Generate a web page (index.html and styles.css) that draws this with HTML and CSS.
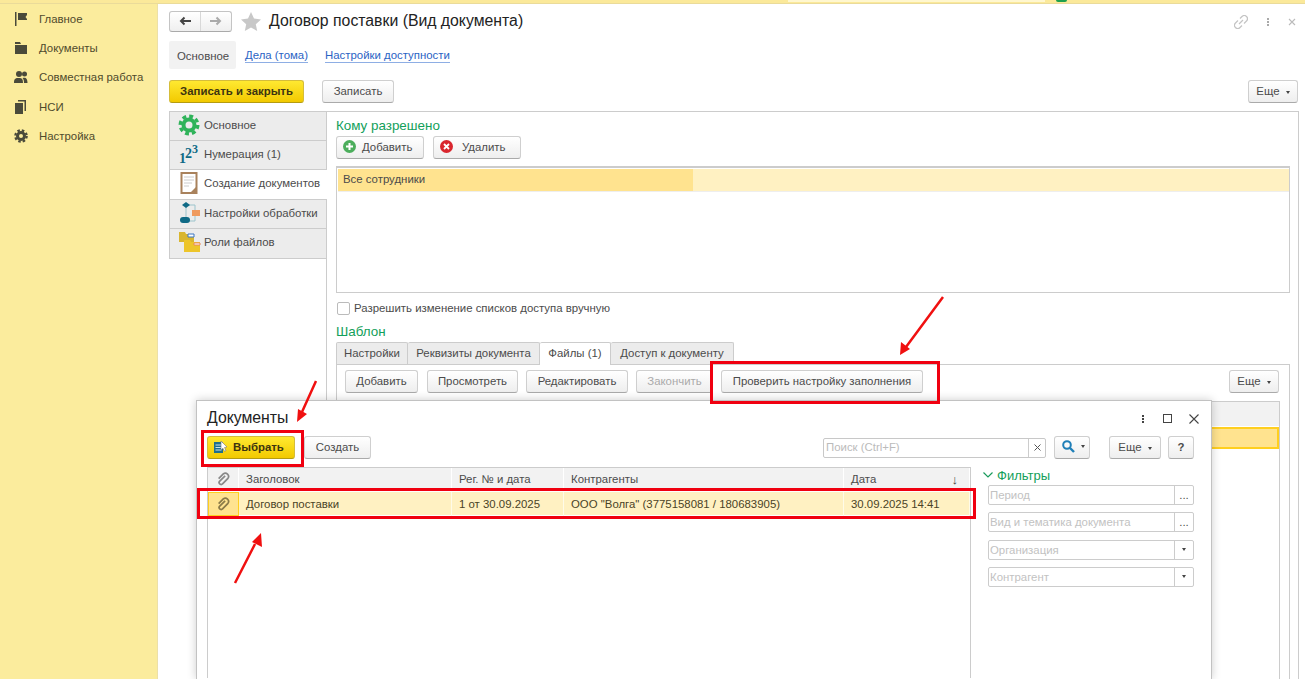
FILE: index.html
```html
<!DOCTYPE html>
<html lang="ru">
<head>
  <meta charset="UTF-8">
  <meta name="viewport" content="width=device-width, initial-scale=1.0">
  <title>Договор поставки (Вид документа)</title>
  <link rel="stylesheet" href="styles.css">
</head>
<body>
  <div class="top-strip">
    <div class="top-field"></div>
    <div class="top-dot"></div>
  </div>

  <div class="app">
    <nav class="sidebar">
      <a class="side-item" href="#">
        <svg width="14" height="14" viewBox="0 0 14 14"><path d="M1 0h1.500v14H1zM4 1h9v2l-1.500 2 1.500 2v1H4z" fill="#4a4a3a"/></svg>
        Главное
      </a>
      <a class="side-item" href="#">
        <svg width="14" height="14" viewBox="0 0 14 14"><path d="M1 1h5l1 2H1zM1 4h12v9H1z" fill="#4a4a3a"/></svg>
        Документы
      </a>
      <a class="side-item" href="#">
        <svg width="14" height="14" viewBox="0 0 14 14"><circle cx="5" cy="4" r="3" fill="#4a4a3a"/><circle cx="10.500" cy="4" r="2.500" fill="#4a4a3a"/><path d="M0 13c0-5 2-5 5-5s4 1 4 5zM10 13c0-2-.3-4-1.500-5 3-1 5 0 5 5z" fill="#4a4a3a"/></svg>
        Совместная работа
      </a>
      <a class="side-item" href="#">
        <svg width="14" height="14" viewBox="0 0 14 14"><path d="M4 0h8v11h-1.500V1.500H4z" fill="#4a4a3a"/><path d="M1 3h8v11H1z" fill="#4a4a3a"/></svg>
        НСИ
      </a>
      <a class="side-item" href="#">
        <svg width="14" height="14" viewBox="0 0 14 14"><circle cx="7" cy="7" r="3.500" fill="none" stroke="#4a4a3a" stroke-width="3"/><circle cx="7" cy="7" r="5.700" fill="none" stroke="#4a4a3a" stroke-width="2.200" stroke-dasharray="2.500 2"/></svg>
        Настройка
      </a>
    </nav>

    <main class="main">
      <div class="title-row">
        <div class="nav-arrows">
          <button class="arrow-btn"><svg width="12" height="10" viewBox="0 0 12 10"><path d="M12 5H3M5.500 1.500 2 5l3.500 3.500" fill="none" stroke="#444" stroke-width="2"/></svg></button>
          <button class="arrow-btn"><svg width="12" height="10" viewBox="0 0 12 10"><path d="M0 5h9M6.500 1.500 10 5 6.500 8.500" fill="none" stroke="#aaa" stroke-width="2"/></svg></button>
        </div>
        <svg class="star" width="20" height="19" viewBox="0 0 20 19"><path d="M10 0l3 6.600 7 .8-5.200 4.800L16.200 19 10 15.500 3.800 19l1.400-6.800L0 7.400l7-.8z" fill="#c8c8c8"/></svg>
        <h1 class="page-title">Договор поставки (Вид документа)</h1>
        <div class="window-tools">
          <svg width="14" height="14" viewBox="0 0 14 14"><path d="M6 3.500 8 1.500a2.600 2.600 0 0 1 4.500 4.500L10 8.500M8 10.500 6 12.500a2.600 2.600 0 0 1-4.500-4.500L4 5.500M5 9l4-4" fill="none" stroke="#c4c4c4" stroke-width="1.200"/></svg>
          <span class="dots dots-light"><i></i><i></i><i></i></span>
          <svg width="8" height="8" viewBox="0 0 8 8"><path d="M1 1l6 6M7 1 1 7" stroke="#bbb" stroke-width="1.100"/></svg>
        </div>
      </div>

      <div class="section-tabs">
        <span class="section-tab active">Основное</span>
        <a class="section-link" href="#">Дела (тома)</a>
        <a class="section-link" href="#">Настройки доступности</a>
      </div>

      <div class="command-bar">
        <button class="btn btn-primary btn-save">Записать и закрыть</button>
        <button class="btn btn-write">Записать</button>
        <button class="btn btn-more push-right">Еще <span class="caret"></span></button>
      </div>

      <div class="content">
        <div class="page-list">
          <div class="page-item">
            <svg width="24" height="22" viewBox="0 0 24 22"><circle cx="12" cy="11" r="5.500" fill="none" stroke="#2fb35a" stroke-width="4"/><circle cx="12" cy="11" r="8.800" fill="none" stroke="#2fb35a" stroke-width="3.400" stroke-dasharray="3.900 3"/></svg>
            Основное
          </div>
          <div class="page-item">
            <span class="digits"><b class="d1">1</b><b class="d2">2</b><b class="d3">3</b></span>
            Нумерация (1)
          </div>
          <div class="page-item active">
            <svg width="24" height="22" viewBox="0 0 24 22"><path d="M4.500 1h15v20h-15z" fill="#fff" stroke="#a9825c" stroke-width="2"/><path d="M7 5h10M7 8h10M7 11h8M7 14h5" stroke="#ccc"/><path d="M13 21l7-7v7z" fill="#a9825c"/></svg>
            Создание документов
          </div>
          <div class="page-item">
            <svg width="24" height="22" viewBox="0 0 24 22"><path d="M9 3v15M9 3h9v16H9" fill="none" stroke="#9cc4cc"/><path d="M9 0l4 3-4 3-4-3z" fill="#0f6a86"/><rect x="3" y="15" width="10" height="6" rx="3" fill="#0f6a86"/><rect x="15" y="8" width="8" height="6" fill="#ef9a5e"/></svg>
            Настройки обработки
          </div>
          <div class="page-item">
            <svg width="24" height="22" viewBox="0 0 24 22"><path d="M2 1h6l1 2h8v8H2z" fill="#d9b62f"/><path d="M11 3h6v3h-6z" fill="#fff" stroke="#3a76c4"/><path d="M7 9h6l1 2h9v10H7z" fill="#edc52a"/><path d="M17 12h6v2h-6z" fill="#fff" stroke="#e8875a"/></svg>
            Роли файлов
          </div>
        </div>

        <div class="panel">
          <div class="group-title">Кому разрешено</div>
          <div class="list-tools">
            <button class="btn btn-icon">
              <svg width="13" height="13" viewBox="0 0 13 13"><circle cx="6.500" cy="6.500" r="6.500" fill="#4cae5c"/><path d="M6.500 3v7M3 6.500h7" stroke="#fff" stroke-width="2"/></svg>
              Добавить
            </button>
            <button class="btn btn-icon btn-remove">
              <svg width="13" height="13" viewBox="0 0 13 13"><circle cx="6.500" cy="6.500" r="6.500" fill="#d9262e"/><path d="M4 4l5 5M9 4 4 9" stroke="#fff" stroke-width="1.800"/></svg>
              Удалить
            </button>
          </div>
          <div class="access-table">
            <div class="access-row">
              <div class="access-cell">Все сотрудники</div>
            </div>
          </div>
          <label class="check-row"><span class="checkbox"></span>Разрешить изменение списков доступа вручную</label>
          <div class="group-title template-title">Шаблон</div>
          <div class="tabs">
            <span class="tab tab-settings">Настройки</span>
            <span class="tab tab-props">Реквизиты документа</span>
            <span class="tab tab-files active">Файлы (1)</span>
            <span class="tab tab-access">Доступ к документу</span>
          </div>
          <div class="tab-body">
            <div class="tab-tools">
              <button class="btn btn-add">Добавить</button>
              <button class="btn btn-view">Просмотреть</button>
              <button class="btn btn-edit">Редактировать</button>
              <button class="btn btn-disabled">Закончить</button>
              <button class="btn btn-check">Проверить настройку заполнения</button>
              <button class="btn btn-more push-right">Еще <span class="caret"></span></button>
            </div>
            <div class="files-table">
              <div class="files-head"></div>
              <div class="files-row"></div>
            </div>
          </div>
        </div>
      </div>
    </main>
  </div>

  <section class="modal">
    <div class="modal-head">
      <h2 class="modal-title">Документы</h2>
      <div class="modal-tools">
        <span class="dots modal-dots"><i></i><i></i><i></i></span>
        <span class="maximize"></span>
        <svg width="10" height="10" viewBox="0 0 10 10"><path d="M.5.500l9 9M9.500.500l-9 9" stroke="#444" stroke-width="1.100"/></svg>
      </div>
    </div>

    <div class="modal-bar">
      <button class="btn btn-primary btn-choose">
        <svg width="14" height="14" viewBox="0 0 14 14"><path d="M0 2h9v11H0z" fill="#1f6f8c"/><path d="M1.500 5h6M1.500 7.500h6M1.500 10h6" stroke="#cfe3ea"/><path d="M7 1l6 6-2.500.5 1.500 3-1.500.8-1.500-3L7 10z" fill="#fff" stroke="#777" stroke-width=".6"/></svg>
        Выбрать
      </button>
      <button class="btn btn-create">Создать</button>
      <div class="search push-right">
        <span class="search-text">Поиск (Ctrl+F)</span>
        <span class="search-clear">
          <svg width="7" height="7" viewBox="0 0 7 7"><path d="M.5.500l6 6M6.500.500l-6 6" stroke="#555"/></svg>
        </span>
      </div>
      <button class="btn btn-search">
        <svg width="13" height="13" viewBox="0 0 13 13"><circle cx="5" cy="5" r="3.800" fill="none" stroke="#1f7fb8" stroke-width="2"/><path d="M8 8l4 4" stroke="#1f7fb8" stroke-width="2.400"/></svg>
        <span class="caret"></span>
      </button>
      <button class="btn btn-modal-more">Еще <span class="caret"></span></button>
      <button class="btn btn-help">?</button>
    </div>

    <div class="modal-body">
      <div class="doc-table">
        <div class="doc-head doc-grid">
          <div class="doc-clip">
            <svg class="clip" width="13" height="14" viewBox="0 0 12 13"><path d="M7.500 2.500 2.500 7.500a1.800 1.800 0 0 0 2.600 2.600l5-5.200A3 3 0 0 0 5.800.800L1.500 5.200" fill="none" stroke="#888" stroke-width="1.600" transform="translate(0 1)"/></svg>
          </div>
          <div>Заголовок</div>
          <div>Рег. № и дата</div>
          <div>Контрагенты</div>
          <div class="doc-date">Дата<span class="sort">↓</span></div>
        </div>
        <div class="doc-row doc-grid">
          <div class="doc-clip current">
            <svg class="clip" width="13" height="14" viewBox="0 0 12 13"><path d="M7.500 2.500 2.500 7.500a1.800 1.800 0 0 0 2.600 2.600l5-5.200A3 3 0 0 0 5.800.800L1.500 5.200" fill="none" stroke="#8a7a48" stroke-width="1.600" transform="translate(0 1)"/></svg>
          </div>
          <div>Договор поставки</div>
          <div>1 от 30.09.2025</div>
          <div>ООО "Волга" (3775158081 / 180683905)</div>
          <div>30.09.2025 14:41</div>
        </div>
      </div>

      <aside class="filters">
        <div class="filters-title">
          <svg width="10" height="6" viewBox="0 0 10 6"><path d="M.5.500 5 5 9.500.500" fill="none" stroke="#1a9b5c" stroke-width="1.200"/></svg>
          Фильтры
        </div>
        <div class="filter-field"><span class="filter-text">Период</span><span class="filter-btn">...</span></div>
        <div class="filter-field"><span class="filter-text">Вид и тематика документа</span><span class="filter-btn">...</span></div>
        <div class="filter-field"><span class="filter-text">Организация</span><span class="filter-btn"><span class="caret"></span></span></div>
        <div class="filter-field"><span class="filter-text">Контрагент</span><span class="filter-btn"><span class="caret"></span></span></div>
      </aside>
    </div>
  </section>

  <!-- красные пометки поверх скриншота -->
  <div class="mark mark-check"></div>
  <div class="mark mark-choose"></div>
  <div class="mark mark-row"></div>
  <svg class="arrows" width="1305" height="679" viewBox="0 0 1305 679">
    <path d="M943 297 906 347M316 381 302 412M235 583 255 544" stroke="#f01010" stroke-width="2.500" fill="none"/>
    <path d="M900 355l1-13 9 7zM297 422l1-13 9 5zM261 533l1 14-10-5z" fill="#f01010"/>
  </svg>
</body>
</html>
```

FILE: styles.css
```css
* {
  box-sizing: border-box;
}
html, body {
  height: 679px;
}
body {
  margin: 0;
  position: relative;
  overflow: hidden;
  font-family: "Liberation Sans", Arial, sans-serif;
  font-size: 11.4px;
  color: #4b4b4b;
  background: #fff;
}
button {
  font-family: inherit;
  font-size: 11.4px;
}

/* верхняя полоса */
.top-strip {
  display: flex;
  height: 4px;
  background: #fbe99a;
  border-bottom: 1px solid #eadb9a;
}
.top-field {
  width: 257px;
  height: 2px;
  margin-left: 788px;
  background: #fff7cf;
}
.top-dot {
  width: 11px;
  height: 2px;
  margin-left: 11px;
  background: #1ea04e;
  border-radius: 0 0 6px 6px;
}

.app {
  display: flex;
  height: 675px;
}

/* левая панель */
.sidebar {
  flex: 0 0 158px;
  background: #fbec9d;
  border-right: 1px solid #ece0a8;
}
.side-item {
  display: flex;
  align-items: center;
  gap: 11px;
  height: 29.4px;
  padding-left: 14px;
  color: #4f4a2c;
  text-decoration: none;
}

/* основная часть */
.main {
  display: flex;
  flex-direction: column;
  flex: 1;
  min-width: 0;
  padding: 7px 6px 0 11px;
}
.title-row {
  display: flex;
  align-items: center;
  height: 21px;
}
.nav-arrows {
  display: flex;
  width: 63px;
  height: 21px;
  border: 1px solid #c4c4c4;
  border-bottom-color: #aaa;
  border-radius: 3px;
  background: linear-gradient(#fff, #efefef);
}
.arrow-btn {
  flex: 1;
  padding: 0;
  border: 0;
  border-right: 1px solid #d8d8d8;
  background: none;
}
.arrow-btn:last-child {
  border-right: 0;
}
.star {
  margin-left: 9px;
}
.page-title {
  margin: 0 0 2px 8px;
  font-size: 15.8px;
  font-weight: normal;
  color: #222;
}
.window-tools {
  display: flex;
  align-items: center;
  gap: 19px;
  margin-left: auto;
  padding-right: 3px;
}
.dots {
  display: flex;
  flex-direction: column;
  gap: 1px;
}
.dots i {
  width: 2px;
  height: 2px;
  background: #444;
}
.dots-light i {
  background: #aaa;
}

.section-tabs {
  display: flex;
  align-items: center;
  height: 28px;
  margin-top: 9px;
}
.section-tab {
  display: flex;
  align-items: center;
  width: 67px;
  height: 28px;
  padding: 1px 0 0 8px;
  background: #f2f2f2;
  border-radius: 2px;
}
.section-link {
  margin: 1px 0 0 9px;
  color: #2a63c4;
  text-decoration: none;
  border-bottom: 1px solid #8eaee4;
  line-height: 13px;
}
.section-link + .section-link {
  margin-left: 17px;
}

.btn {
  height: 23px;
  padding-block: 0 2px;
  padding-inline: 11px;
  color: #4b4b4b;
  background: linear-gradient(#fff, #eee);
  border: 1px solid #cfcfcf;
  border-bottom-color: #aaa;
  border-radius: 3px;
  white-space: nowrap;
}
.btn-primary {
  font-weight: bold;
  color: #3d3410;
  background: linear-gradient(#ffe931, #f2c900);
  border-color: #d5bd3a;
  border-bottom-color: #b59c10;
}
.btn-disabled {
  width: 77px;
  padding-inline: 0;
  color: #aaa;
}
.caret {
  display: inline-block;
  width: 0;
  height: 0;
  margin-left: 3px;
  vertical-align: 1px;
  border-left: 2.500px solid transparent;
  border-right: 2.500px solid transparent;
  border-top: 3px solid #444;
}
.push-right {
  margin-left: auto;
}

.command-bar {
  display: flex;
  height: 23px;
  margin-top: 11px;
}
.btn-save {
  width: 135px;
  padding-inline: 0;
}
.btn-write {
  width: 72px;
  padding-inline: 0;
  margin-left: 18px;
}
.btn-more {
  width: 50px;
  padding-inline: 0;
  margin-right: 1px;
}

.content {
  display: flex;
  flex: 1;
  min-height: 0;
  margin-top: 8px;
}

.page-list {
  flex: 0 0 157px;
  align-self: flex-start;
}
.page-item {
  display: flex;
  align-items: center;
  gap: 3px;
  height: 29.500px;
  padding: 0 0 2px 7px;
  background: #ececec;
  border: 1px solid #ccc;
  border-right: 0;
  border-top: 0;
}
.page-item:first-child {
  border-top: 1px solid #ccc;
}
.page-item.active {
  position: relative;
  z-index: 1;
  margin-right: -1px;
  background: #fff;
}
.digits {
  position: relative;
  flex: 0 0 24px;
  height: 22px;
  font-family: "Liberation Serif", serif;
  color: #0f6a86;
}
.digits b {
  position: absolute;
}
.d1 {
  left: 2px;
  top: 8px;
  font-size: 14px;
}
.d2 {
  left: 8px;
  top: 3px;
  font-size: 14px;
}
.d3 {
  left: 15px;
  top: -1px;
  font-size: 12px;
}

.panel {
  flex: 1;
  min-width: 0;
  padding: 4px 8px 0 9px;
  border: 1px solid #ccc;
  border-bottom: 0;
}
.group-title {
  height: 18px;
  font-size: 13.4px;
  line-height: 20px;
  color: #12a05a;
}
.list-tools {
  display: flex;
  gap: 9px;
  margin-top: 2px;
}
.btn-icon {
  display: flex;
  align-items: center;
  gap: 6px;
  width: 88px;
  padding-inline: 6px 0;
}
.btn-remove {
  gap: 9px;
}
.access-table {
  height: 127px;
  margin-top: 7px;
  padding: 1px 0 1px 1px;
  border: 1px solid #ccc;
  border-top-width: 2px;
}
.access-row {
  height: 23px;
  background: #fff1c2;
  border-bottom: 1px solid #eee;
}
.access-cell {
  width: 355px;
  height: 22px;
  padding-left: 5px;
  line-height: 20px;
  background: #ffe38f;
}
.check-row {
  display: flex;
  align-items: center;
  gap: 4px;
  height: 14px;
  margin: 8px 0 0 1px;
}
.checkbox {
  width: 13px;
  height: 13px;
  border: 1px solid #bbb;
  border-radius: 2px;
}
.template-title {
  margin-top: 7px;
}

.tabs {
  display: flex;
  height: 22px;
  margin-top: 2px;
}
.tab {
  display: flex;
  align-items: center;
  justify-content: center;
  padding-bottom: 2px;
  background: #ececec;
  border: 1px solid #ccc;
  border-left: 0;
  border-bottom: 0;
  border-radius: 2px 2px 0 0;
}
.tab:first-child {
  border-left: 1px solid #ccc;
}
.tab-settings {
  width: 72px;
}
.tab-props {
  width: 132px;
}
.tab-files {
  width: 71px;
}
.tab-access {
  width: 123px;
}
.tab.active {
  position: relative;
  z-index: 1;
  height: 23px;
  padding-bottom: 3px;
  background: #fff;
}
.tab-body {
  height: 315px;
  padding: 5px 9px 0 8px;
  border: 1px solid #ccc;
  border-bottom: 0;
}
.tab-tools {
  display: flex;
  gap: 8px;
}
.btn-add {
  width: 73px;
  padding-inline: 0;
  margin-right: 1px;
}
.btn-view {
  width: 91px;
  padding-inline: 0;
}
.btn-edit {
  width: 102px;
  padding-inline: 0;
}
.btn-check {
  width: 202px;
  padding-inline: 0;
}
.files-table {
  height: 279px;
  margin-top: 8px;
  border: 1px solid #ccc;
  border-bottom: 0;
}
.files-head {
  height: 24px;
  background: #f2f2f2;
}
.files-row {
  height: 22px;
  margin-top: 1px;
  background: #ffe38f;
  border: 2px solid #ffcf1f;
}

/* окно выбора */
.modal {
  position: absolute;
  left: 196px;
  top: 400px;
  width: 1016px;
  height: 279px;
  padding: 0 17px 0 10px;
  background: #fff;
  border: 1px solid #c2c2c2;
  border-bottom: 0;
  box-shadow: 0 0 9px rgba(0, 0, 0, .2);
}
.modal-head {
  display: flex;
  align-items: center;
  height: 35px;
}
.modal-title {
  margin: 0 0 2px;
  font-size: 15.8px;
  font-weight: normal;
  color: #222;
}
.modal-tools {
  display: flex;
  align-items: center;
  gap: 17px;
  margin: 0 -5px 0 auto;
}
.modal-dots {
  margin-right: 2px;
}
.maximize {
  width: 9px;
  height: 9px;
  border: 1px solid #444;
}
.modal-bar {
  display: flex;
  align-items: center;
  height: 23px;
}
.btn-choose {
  display: flex;
  align-items: center;
  gap: 5px;
  width: 88px;
  padding-inline: 6px 0;
}
.btn-create {
  width: 67px;
  padding-inline: 0;
  margin-left: 9px;
}
.search {
  display: flex;
  width: 223px;
  height: 20px;
  color: #bbb;
  border: 1px solid #c8c8c8;
  border-radius: 2px;
}
.search-text {
  flex: 1;
  padding-left: 2px;
  line-height: 17px;
}
.search-clear {
  display: flex;
  align-items: center;
  justify-content: center;
  width: 17px;
  border-left: 1px solid #ccc;
}
.btn-search {
  display: flex;
  align-items: center;
  width: 36px;
  padding-inline: 7px 0;
  margin-left: 8px;
}
.btn-search .caret {
  margin-left: 6px;
}
.btn-modal-more {
  width: 52px;
  padding-inline: 0;
  margin-left: 19px;
}
.btn-help {
  width: 26px;
  padding-inline: 0;
  margin-left: 7px;
  font-weight: bold;
}

.modal-body {
  display: flex;
  margin-top: 8px;
}
.doc-table {
  flex: 0 0 764px;
  height: 211px;
  border: 1px solid #ccc;
  border-bottom: 0;
}
.doc-grid {
  display: grid;
  grid-template-columns: 31px 213px 112px 280px 1fr;
}
.doc-head {
  height: 22px;
  background: #f2f2f2;
}
.doc-head > div {
  padding: 1px 0 0 7px;
  line-height: 21px;
  border-right: 1px solid #fff;
}
.doc-head > .doc-clip {
  padding: 0;
}
.doc-clip {
  display: flex;
  align-items: center;
  justify-content: center;
}
.clip {
  display: block;
}
.doc-date {
  display: flex;
  justify-content: space-between;
}
.doc-head > .doc-date {
  padding-right: 11px;
}
.sort {
  font-size: 13px;
  color: #444;
}
.doc-row {
  height: 23px;
  margin-top: 2px;
  color: #4a4326;
  background: #fff1c2;
}
.doc-row > div {
  padding: 1px 0 0 7px;
  line-height: 23px;
  border-right: 1px solid #fffbe8;
}
.doc-row > .doc-clip {
  padding: 0;
  background: #ffe38f;
  border: 1px solid #ffcf1f;
}

.filters {
  flex: 0 0 223px;
  padding-left: 12px;
}
.filters-title {
  display: flex;
  align-items: center;
  gap: 4px;
  height: 16px;
  font-size: 13px;
  color: #12a05a;
}
.filter-field {
  display: flex;
  height: 20px;
  margin: 0 0 7.300px 5px;
  border: 1px solid #ccc;
  border-radius: 2px;
}
.filters-title + .filter-field {
  margin-top: 2px;
}
.filter-text {
  flex: 1;
  padding-left: 1px;
  line-height: 19px;
  color: #c2c2c2;
}
.filter-btn {
  display: flex;
  align-items: center;
  justify-content: center;
  width: 19px;
  border-left: 1px solid #ccc;
}
.filter-btn .caret {
  margin-left: 0;
}

/* пометки */
.mark {
  position: absolute;
  border: 3px solid #f00010;
}
.mark-check {
  left: 710px;
  top: 361px;
  width: 230px;
  height: 43px;
}
.mark-choose {
  left: 201px;
  top: 430px;
  width: 103px;
  height: 37px;
}
.mark-row {
  left: 197px;
  top: 488px;
  width: 779px;
  height: 31px;
}
.arrows {
  position: absolute;
  left: 0;
  top: 0;
  pointer-events: none;
}
```
